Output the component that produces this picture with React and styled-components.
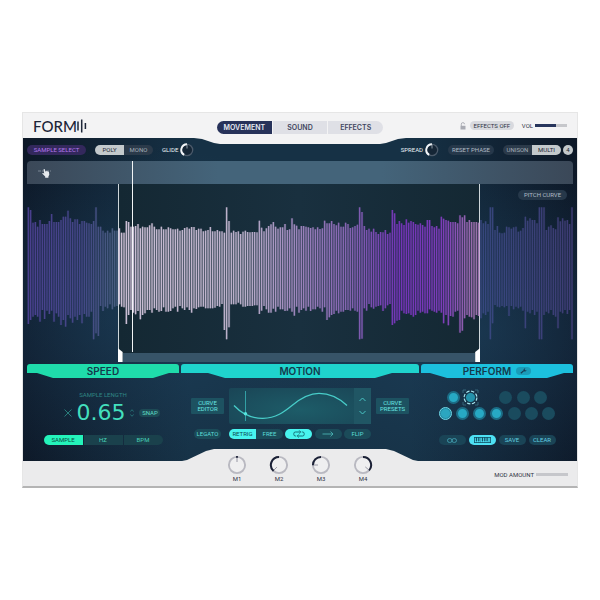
import React, { useState } from "react";
import styled, { createGlobalStyle, css } from "styled-components";

const GlobalStyle = createGlobalStyle`
  *, *::before, *::after {
    box-sizing: border-box;
  }

  body {
    margin: 0;
    background: #ffffff;
    font-family: "Roboto", "Liberation Sans", sans-serif;
    font-size: 6px;
  }

  button {
    margin: 0;
    padding: 0;
    border: 0;
    font: inherit;
    color: inherit;
    background: none;
    cursor: pointer;
  }
`;

// upper and lower end of every waveform bar, in thirds of a pixel
const PEAKS = [
  22, 30, 68, 66, 80, 60, 72, 72, 72, 63, 42, 66, 66, 66, 60, 50, 50, 32, 55, 66,
  58, 58, 72, 63, 63, 68, 70, 72, 63, 22, 80, 80, 92, 98, 92, 98, 85, 92, 92, 85,
  98, 98, 63, 66, 80, 80, 78, 72, 85, 80, 82, 82, 76, 70, 80, 88, 88, 80, 88, 88,
  82, 85, 88, 88, 86, 92, 90, 84, 82, 86, 81, 81, 90, 86, 86, 94, 92, 90, 81, 94,
  94, 90, 94, 94, 98, 22, 63, 98, 92, 96, 94, 102, 95, 92, 96, 97, 96, 96, 97, 62,
  83, 94, 85, 78, 73, 66, 80, 86, 82, 82, 72, 90, 88, 55, 73, 77, 88, 78, 78, 80,
  82, 84, 82, 88, 82, 87, 85, 62, 70, 70, 63, 72, 76, 68, 80, 80, 68, 72, 84, 82,
  78, 74, 22, 36, 78, 90, 86, 95, 86, 96, 102, 96, 97, 90, 102, 98, 30, 40, 72, 63,
  70, 75, 58, 68, 63, 66, 72, 74, 70, 75, 80, 60, 60, 78, 82, 78, 86, 50, 56, 60,
  62, 66, 66, 66, 70, 46, 52, 46, 66, 60, 66, 66, 66, 68, 60, 70, 64, 72, 22, 22,
  90, 78, 98, 100, 98, 80, 82, 86, 82, 80, 95, 92, 84, 50, 62, 55, 60, 60, 70, 22,
  22, 22, 90, 80, 76, 84, 88, 52, 64, 55, 62, 60, 72, 22,
];
const DIPS = [
  372, 360, 350, 345, 350, 365, 330, 357, 332, 342, 332, 365, 340, 350, 375, 360, 380, 345, 355, 368,
  350, 360, 345, 370, 342, 350, 350, 335, 418, 400, 408, 318, 333, 320, 325, 313, 328, 320, 318, 313,
  320, 322, 372, 345, 330, 338, 343, 333, 358, 345, 340, 330, 330, 338, 325, 330, 335, 333, 322, 335,
  335, 333, 325, 320, 335, 318, 325, 330, 322, 330, 338, 325, 327, 322, 320, 320, 325, 325, 325, 325,
  323, 318, 320, 312, 390, 418, 382, 313, 313, 313, 308, 313, 320, 320, 318, 318, 318, 316, 316, 342,
  332, 318, 328, 338, 338, 326, 335, 320, 328, 328, 333, 332, 325, 335, 347, 320, 338, 330, 325, 332,
  320, 333, 328, 328, 320, 325, 335, 322, 360, 352, 345, 342, 332, 340, 335, 335, 330, 330, 332, 325,
  332, 335, 418, 416, 325, 332, 312, 322, 326, 320, 318, 316, 333, 325, 316, 312, 375, 370, 362, 360,
  332, 340, 342, 340, 345, 350, 345, 332, 338, 335, 340, 340, 328, 332, 335, 338, 332, 338, 370, 345,
  376, 348, 350, 335, 332, 398, 392, 355, 345, 350, 352, 358, 345, 348, 355, 340, 345, 335, 418, 370,
  315, 320, 322, 318, 322, 318, 348, 318, 328, 320, 325, 320, 332, 385, 335, 340, 330, 345, 335, 418,
  418, 345, 335, 340, 330, 345, 350, 385, 335, 340, 330, 342, 330, 418,
];

const BAR_PATH = PEAKS.map((top, i) => `M${4 + i * 7} ${top + 48}V${DIPS[i] + 48}`).join("");

const PADS_TOP = ["on", "armed", null, "off", "off", "off"];
const PADS_BOTTOM = ["picked", "on", "on", "on", "off", "off", "off"];

const MACROS = [
  { name: "M1", from: -6, to: 6, pointer: 0 },
  { name: "M2", from: -138, to: 0, pointer: -135 },
  { name: "M3", from: -92, to: 0, pointer: -90 },
  { name: "M4", from: 0, to: 132, pointer: 130 },
];

const point = (c, r, deg) => {
  const a = ((deg - 90) * Math.PI) / 180;
  return `${(c + r * Math.cos(a)).toFixed(2)} ${(c + r * Math.sin(a)).toFixed(2)}`;
};
const arc = (c, r, from, to) =>
  `M${point(c, r, from)}A${r} ${r} 0 ${to - from > 180 ? 1 : 0} 1 ${point(c, r, to)}`;

function SmallKnob() {
  return (
    <svg width="14" height="14" viewBox="0 0 14 14" aria-hidden="true">
      <circle cx="7" cy="7" r="5.7" fill="#152636" stroke="#4b5a6a" strokeWidth="1.3" />
      <path d={arc(7, 5.7, -150, 0)} fill="none" stroke="#f2f5f8" strokeWidth="1.9" />
      <path d="M7 1.5V5.5" stroke="#aab4be" strokeWidth="0.8" />
    </svg>
  );
}

function MacroKnob({ from, to, pointer }) {
  return (
    <svg width="20" height="20" viewBox="0 0 20 20" aria-hidden="true">
      <circle cx="10" cy="10" r="8.1" fill="#efeff0" stroke="#b9b9c1" strokeWidth="1.9" />
      <path d={arc(10, 8.1, from, to)} fill="none" stroke="#1b2136" strokeWidth="2" />
      <path d={`M${point(10, 3, pointer)}L${point(10, 7.2, pointer)}`} stroke="#8f8f9c" strokeWidth="0.9" />
    </svg>
  );
}

function Waveform() {
  return (
    <WaveSvg viewBox="0 0 1638 534" preserveAspectRatio="none" aria-label="Sample waveform" role="img">
      <defs>
        <linearGradient id="wave" gradientUnits="userSpaceOnUse" x1="0" y1="0" x2="1638" y2="0">
          <stop offset="0" stopColor="#54459e" />
          <stop offset="0.1" stopColor="#4b4b92" />
          <stop offset="0.166" stopColor="#506688" />
          <stop offset="0.167" stopColor="#ead8f0" />
          <stop offset="0.4" stopColor="#d3c3e0" />
          <stop offset="0.5" stopColor="#b090d0" />
          <stop offset="0.6" stopColor="#9268c4" />
          <stop offset="0.68" stopColor="#8236cc" />
          <stop offset="0.76" stopColor="#8d3fd0" />
          <stop offset="0.82" stopColor="#b07cc0" />
          <stop offset="0.829" stopColor="#b07cc0" />
          <stop offset="0.83" stopColor="#3d4b88" />
          <stop offset="1" stopColor="#45407e" />
        </linearGradient>
      </defs>
      <path d={BAR_PATH} stroke="url(#wave)" strokeWidth="7" opacity="0.3" />
      <path d={BAR_PATH} stroke="url(#wave)" strokeWidth="3" opacity="0.95" />
    </WaveSvg>
  );
}

function Pads({ row, pads, $width }) {
  return (
    <PadRow $width={$width}>
      {pads.map((state, i) =>
        state ? (
          <Pad key={i} type="button" $state={state} aria-label={`${row} pad ${i + 1}`}>
            {state === "armed" && (
              <svg width="17" height="17" viewBox="0 0 17 17" aria-hidden="true">
                <circle cx="8.5" cy="8.5" r="6.4" fill="none" stroke="#a6e3ee" strokeWidth="1.2" strokeDasharray="3.3 1.7" />
                <path d="M1 4V1H4M13 1H16V4M16 13V16H13M4 16H1V13" fill="none" stroke="#41788c" strokeWidth="0.7" />
              </svg>
            )}
          </Pad>
        ) : (
          <PadGap key={i} />
        )
      )}
    </PadRow>
  );
}

export default function App() {
  const [page, setPage] = useState("MOVEMENT");
  const [unit, setUnit] = useState("SAMPLE");

  return (
    <Page>
      <GlobalStyle />
      <Device>
        <Header>
          <Logo>
            FORM
            <svg width="11" height="14" viewBox="0 0 11 14" aria-hidden="true">
              <path d="M1 2.5V11.5" stroke="#1d2638" strokeWidth="1.5" />
              <path d="M4.7 0.5V13.5" stroke="#1d2638" strokeWidth="1.5" />
              <path d="M8.4 4V10" stroke="#1d2638" strokeWidth="1.5" />
            </svg>
          </Logo>
          <PageTabs>
            {["MOVEMENT", "SOUND", "EFFECTS"].map((name) => (
              <PageTab key={name} type="button" $active={page === name} onClick={() => setPage(name)}>
                {name}
              </PageTab>
            ))}
          </PageTabs>
          <HeaderRight>
            <svg width="6" height="8" viewBox="0 0 6 8" aria-hidden="true">
              <path d="M1.3 4V2.2a1.6 1.6 0 0 1 3.2 0" fill="none" stroke="#a9abb3" strokeWidth="0.9" />
              <rect x="0.5" y="3.8" width="5" height="3.7" fill="#a9abb3" />
            </svg>
            <EffectsOff type="button">EFFECTS OFF</EffectsOff>
            <Volume>
              VOL
              <Track>
                <TrackFill style={{ width: "66%" }} />
              </Track>
            </Volume>
          </HeaderRight>
        </Header>

        <Body>
          <Toolbar>
            <SampleSelect type="button">SAMPLE SELECT</SampleSelect>
            <Switch>
              <SwitchButton type="button" $active>POLY</SwitchButton>
              <SwitchButton type="button">MONO</SwitchButton>
            </Switch>
            <KnobLabel>GLIDE <SmallKnob /></KnobLabel>
            <Spacer />
            <KnobLabel>SPREAD <SmallKnob /></KnobLabel>
            <GreyPill type="button" $width={46}>RESET PHASE</GreyPill>
            <Voices>
              <Switch>
                <SwitchButton type="button">UNISON</SwitchButton>
                <SwitchButton type="button" $active>MULTI</SwitchButton>
              </Switch>
              <Count type="button">4</Count>
            </Voices>
          </Toolbar>

          <Editor>
            <Overview>
              <svg width="15" height="12" viewBox="0 0 15 12" aria-hidden="true">
                <path d="M0 4H13" stroke="#8b98a3" strokeWidth="0.8" strokeDasharray="3 1" />
                <path d="M5.6 2.2c.5-.5 1.2-.2 1.3.4l.5 2.1.4-.5c.4-.3.8-.2 1 .2.4-.4.9-.3 1.1.2.6-.3 1 0 1.1.6l.3 2.6-.9 1.8v1.2H7.2V9.6L4.4 6.8c-.3-.6.3-1.1.9-.7l.9.6z" fill="#e6eaee" />
              </svg>
            </Overview>
            <Wave>
              <Selection>
                <Handle $side="left" />
                <ScrollThumb />
                <Handle $side="right" />
              </Selection>
              <Waveform />
              <PitchCurve type="button" $width={49}>PITCH CURVE</PitchCurve>
            </Wave>
            <Playhead />
          </Editor>

          <Sections>
            <Section>
              <SectionTitle $color="#1fdcab" $inset={10} $slope={16}>SPEED</SectionTitle>
              <SpeedBody>
                <Caption>SAMPLE LENGTH</Caption>
                <ValueRow>
                  <svg width="8" height="8" viewBox="0 0 8 8" aria-hidden="true">
                    <path d="M0.5 0.5 7.5 7.5M7.5 0.5 0.5 7.5" stroke="#2b8681" strokeWidth="0.9" />
                  </svg>
                  <Value>0.65</Value>
                  <svg width="4" height="8" viewBox="0 0 4 8" aria-hidden="true">
                    <path d="M0.3 2.6 2 0.7 3.7 2.6M0.3 5.4 2 7.3 3.7 5.4" fill="none" stroke="#2b7f80" strokeWidth="0.8" />
                  </svg>
                  <Snap type="button">SNAP</Snap>
                </ValueRow>
                <UnitTabs>
                  {["SAMPLE", "HZ", "BPM"].map((name) => (
                    <UnitTab key={name} type="button" $active={unit === name} onClick={() => setUnit(name)}>
                      {name}
                    </UnitTab>
                  ))}
                </UnitTabs>
              </SpeedBody>
            </Section>

            <Section>
              <SectionTitle $color="#1fd4cd" $inset={27} $slope={17}>MOTION</SectionTitle>
              <MotionBody>
                <CurveButton type="button">CURVE EDITOR</CurveButton>
                <CurveDisplay>
                  <svg width="125" height="36" viewBox="0 0 125 36" aria-hidden="true">
                    <path d="M16.5 3V33" stroke="#36a9ae" strokeWidth="0.9" />
                    <path d="M5 17.5C14 27 23 30.5 34 30.3 47 30 55 24 63 17.5 72 10 80 5.4 90 5.4 102 5.4 110 10 118 17.5" fill="none" stroke="#48cdc9" strokeWidth="1.3" />
                    <circle cx="16.5" cy="25.8" r="1.7" fill="#56e5de" />
                  </svg>
                  <Arrows>
                    <button type="button" aria-label="Previous curve">
                      <svg width="7" height="5" viewBox="0 0 7 5"><path d="M0.5 4 3.5 1 6.5 4" fill="none" stroke="#49c5c4" strokeWidth="1" /></svg>
                    </button>
                    <button type="button" aria-label="Next curve">
                      <svg width="7" height="5" viewBox="0 0 7 5"><path d="M0.5 1 3.5 4 6.5 1" fill="none" stroke="#49c5c4" strokeWidth="1" /></svg>
                    </button>
                  </Arrows>
                </CurveDisplay>
                <CurveButton type="button">CURVE PRESETS</CurveButton>
                <TealPill type="button">LEGATO</TealPill>
                <MotionButtons>
                  <TealSwitch>
                    <TealHalf type="button" $active>RETRIG</TealHalf>
                    <TealHalf type="button">FREE</TealHalf>
                  </TealSwitch>
                  <TealPill type="button" $active aria-label="Loop">
                    <svg width="12" height="8" viewBox="0 0 12 8" aria-hidden="true">
                      <path d="M3.2 6H2.4A1.6 1.6 0 0 1 0.8 4.4V3.6A1.6 1.6 0 0 1 2.4 2H7.4M8.8 2H9.6A1.6 1.6 0 0 1 11.2 3.6V4.4A1.6 1.6 0 0 1 9.6 6H4.6" fill="none" stroke="#11636b" strokeWidth="0.9" />
                      <path d="M6.2 0.4 7.8 2 6.2 3.6M5.8 4.4 4.2 6 5.8 7.6" fill="none" stroke="#11636b" strokeWidth="0.8" />
                    </svg>
                  </TealPill>
                  <TealPill type="button" aria-label="One shot">
                    <svg width="12" height="6" viewBox="0 0 12 6" aria-hidden="true">
                      <path d="M0.5 3H11M8.5 0.6 11 3 8.5 5.4" fill="none" stroke="#4fbcbd" strokeWidth="0.8" />
                    </svg>
                  </TealPill>
                  <TealPill type="button">FLIP</TealPill>
                </MotionButtons>
              </MotionBody>
            </Section>

            <Section>
              <SectionTitle $color="#1cc0de" $inset={9} $slope={17}>
                PERFORM
                <Wrench type="button" aria-label="Perform settings">
                  <svg width="7" height="6" viewBox="0 0 7 6" aria-hidden="true">
                    <path d="M0.8 5.3 3.8 2.6" stroke="#153a52" strokeWidth="1.2" />
                    <path d="M5.4 0.5A1.5 1.5 0 1 0 6.5 2.1L5 2.4 4.6 1.6Z" fill="#153a52" />
                  </svg>
                </Wrench>
              </SectionTitle>
              <PerformBody>
                <Pads row="Upper" pads={PADS_TOP} $width={100} />
                <Pads row="Lower" pads={PADS_BOTTOM} $width={117} />
                <PerformButtons>
                  <TealPill type="button" $blue aria-label="Link">
                    <svg width="10" height="5" viewBox="0 0 10 5" aria-hidden="true">
                      <rect x="0.5" y="0.6" width="4.6" height="3.8" rx="1.9" fill="none" stroke="#48a9bb" strokeWidth="0.8" />
                      <rect x="4.9" y="0.6" width="4.6" height="3.8" rx="1.9" fill="none" stroke="#48a9bb" strokeWidth="0.8" />
                    </svg>
                  </TealPill>
                  <TealPill type="button" $blue $active aria-label="Keyboard">
                    <svg width="17" height="6" viewBox="0 0 17 6" aria-hidden="true">
                      <rect x="0.4" y="0.4" width="16.2" height="5.2" fill="none" stroke="#125267" strokeWidth="0.8" />
                      <path d="M2.5 0V4M4.8 0V4M8.5 0V4M10.8 0V4M13.1 0V4" stroke="#125267" strokeWidth="1.3" />
                      <path d="M6.6 0V6M15 0V6M2.5 4V6M4.8 4V6M8.5 4V6M10.8 4V6M13.1 4V6" stroke="#125267" strokeWidth="0.4" />
                    </svg>
                  </TealPill>
                  <TealPill type="button" $blue>SAVE</TealPill>
                  <TealPill type="button" $blue>CLEAR</TealPill>
                </PerformButtons>
              </PerformBody>
            </Section>
          </Sections>
        </Body>

        <Footer>
          <Macros>
            {MACROS.map((m) => (
              <Macro key={m.name}>
                <MacroKnob from={m.from} to={m.to} pointer={m.pointer} />
                {m.name}
              </Macro>
            ))}
          </Macros>
          <ModAmount>
            MOD AMOUNT
            <Track />
          </ModAmount>
        </Footer>
      </Device>
    </Page>
  );
}

const Page = styled.main`
  padding: 112px 22px;
`;

const Device = styled.div`
  border: 1px solid #e6e6e6;
  border-bottom: 2px solid #b4b4b4;
  background: #ececed;
`;

const Header = styled.header`
  position: relative;
  z-index: 1;
  display: grid;
  grid-template-columns: 1fr 166px 1fr;
  height: 31px;
  margin-bottom: -6px;
  padding: 0 10px;
  background: #f3f3f4;
  clip-path: polygon(
    0 0, 100% 0, 100% 25px, calc(50% + 106px) 25px, calc(50% + 98px) 26px, calc(50% + 86px) 30px, calc(50% + 80px) 31px,
    calc(50% - 80px) 31px, calc(50% - 86px) 30px, calc(50% - 98px) 26px, calc(50% - 106px) 25px, 0 25px
  );
`;

const Logo = styled.div`
  display: flex;
  align-items: center;
  height: 25px;
  color: #1d2638;
  font-family: "Lato", sans-serif;
  font-size: 15px;
  font-weight: 500;
`;

const PageTabs = styled.nav`
  display: grid;
  grid-template-columns: repeat(3, 1fr);
  height: 13px;
  margin-top: 8px;
  gap: 1px;
  border-radius: 7px;
  overflow: hidden;
`;

const PageTab = styled.button`
  font-family: "Inter", sans-serif;
  font-size: 7px;
  font-weight: 600;
  line-height: 13px;
  color: ${({ $active }) => ($active ? "#e9ebf2" : "#3f4660")};
  background: ${({ $active }) => ($active ? "#27325a" : "#dfe0e6")};
`;

const HeaderRight = styled.div`
  display: flex;
  align-items: center;
  justify-content: flex-end;
  height: 25px;
  gap: 4px;
  color: #2f3344;
`;

const EffectsOff = styled.button`
  width: 44px;
  height: 9px;
  border-radius: 5px;
  line-height: 9px;
  background: #d8d9de;
`;

const Volume = styled.div`
  display: flex;
  align-items: center;
  gap: 2px;
  margin-left: 4px;
`;

const Track = styled.div`
  width: 32px;
  height: 3px;
  background: #c6c7cb;
`;

const TrackFill = styled.div`
  height: 100%;
  background: #27355c;
`;

const Body = styled.div`
  padding: 0 4px;
  background:
    radial-gradient(ellipse 260px 170px at 20% 55%, rgba(36, 78, 112, 0.4), transparent),
    radial-gradient(ellipse 260px 170px at 82% 60%, rgba(36, 78, 112, 0.4), transparent),
    linear-gradient(90deg, #0d1827, #163145 30%, #163145 70%, #0d1827);
`;

const Toolbar = styled.div`
  display: flex;
  align-items: center;
  height: 23px;
  gap: 9px;
`;

const pill = css`
  height: 10px;
  border-radius: 5px;
  line-height: 10px;
  text-align: center;
`;

const SampleSelect = styled.button`
  ${pill}
  width: 59px;
  color: #b478ee;
  background: #33285c;
`;

const Switch = styled.div`
  display: flex;
  height: 10px;
  border-radius: 5px;
  overflow: hidden;
`;

const SwitchButton = styled.button`
  width: 29px;
  line-height: 10px;
  color: ${({ $active }) => ($active ? "#1c2632" : "#a5afba")};
  background: ${({ $active }) => ($active ? "#c3c9cc" : "#2b3a4a")};
`;

const KnobLabel = styled.div`
  display: flex;
  align-items: center;
  gap: 2px;
  color: #eef2f6;
`;

const Spacer = styled.div`
  flex: 1;
`;

const GreyPill = styled.button`
  ${pill}
  width: ${({ $width }) => $width}px;
  color: #b0bcc8;
  background: #26384a;
`;

const Voices = styled.div`
  display: flex;
  gap: 2px;
`;

const Count = styled.button`
  width: 10px;
  height: 10px;
  border-radius: 50%;
  line-height: 10px;
  color: #1c2632;
  background: #c3c9cc;
`;

const Editor = styled.div`
  position: relative;
`;

const Overview = styled.div`
  display: flex;
  align-items: center;
  height: 23px;
  padding-left: 11px;
  border-radius: 4px 4px 0 0;
  background: linear-gradient(90deg, #3b4858, #44647a 35%, #44647a 65%, #3b4858);
`;

const Wave = styled.div`
  position: relative;
  height: 178px;
`;

const WaveSvg = styled.svg`
  position: relative;
  display: block;
  width: 100%;
  height: 100%;
`;

const Selection = styled.div`
  position: absolute;
  inset: 0 17% 0 16.6%;
  border: solid #cdd6da;
  border-width: 0 1px;
  background: linear-gradient(90deg, #142833, #19303f 50%, #142833);
`;

const Handle = styled.span`
  position: absolute;
  bottom: 0;
  ${({ $side }) => $side}: -1px;
  width: 5px;
  height: 14px;
  background: #ffffff;
  clip-path: ${({ $side }) =>
    $side === "left" ? "polygon(0 0, 100% 4px, 100% 100%, 0 100%)" : "polygon(100% 0, 0 4px, 0 100%, 100% 100%)"};
`;

const ScrollThumb = styled.div`
  position: absolute;
  right: 4px;
  bottom: 0;
  left: 4px;
  height: 9px;
  background: #375468;
`;

const PitchCurve = styled(GreyPill)`
  position: absolute;
  top: 6px;
  right: 6px;
`;

const Playhead = styled.div`
  position: absolute;
  top: 0;
  left: 19.3%;
  width: 1px;
  height: 191px;
  background: #f2f5f6;
`;

const Sections = styled.div`
  display: grid;
  grid-template-columns: 152fr 238fr 152fr;
  gap: 2px;
  padding-top: 2px;
`;

const Section = styled.section`
  height: 97px;
`;

const SectionTitle = styled.h2`
  display: flex;
  align-items: center;
  justify-content: center;
  height: 14px;
  margin: 0;
  gap: 5px;
  border-radius: 3px 3px 0 0;
  color: #143a4c;
  font-family: "Inter", sans-serif;
  font-size: 10px;
  font-weight: 600;
  line-height: 14px;
  background: ${({ $color }) => $color};
  clip-path: ${({ $inset, $slope }) => `polygon(
    0 0, 100% 0, 100% 9px, calc(100% - ${$inset}px) 9px, calc(100% - ${$inset + $slope}px) 14px,
    ${$inset + $slope}px 14px, ${$inset}px 9px, 0 9px
  )`};
`;

const Wrench = styled.button`
  display: flex;
  align-items: center;
  justify-content: center;
  width: 15px;
  height: 8px;
  border-radius: 4px;
  background: #1a9cba;
`;

const SpeedBody = styled.div`
  display: flex;
  flex-direction: column;
  align-items: center;
  padding-top: 13px;
`;

const Caption = styled.div`
  line-height: 8px;
  color: #2f8684;
`;

const ValueRow = styled.div`
  display: flex;
  align-items: center;
  height: 28px;
  gap: 5px;
  margin-left: 18px;
`;

const Value = styled.output`
  color: #43dfbd;
  font-family: "DejaVu Sans", sans-serif;
  font-size: 22px;
  line-height: 28px;
`;

const Snap = styled.button`
  width: 21px;
  height: 8px;
  border-radius: 4px;
  line-height: 8px;
  color: #5fdcc6;
  background: #1d4a55;
`;

const UnitTabs = styled.div`
  display: grid;
  grid-template-columns: repeat(3, 1fr);
  width: 119px;
  height: 10px;
  margin-top: 8px;
  gap: 1px;
  border-radius: 5px;
  overflow: hidden;
`;

const UnitTab = styled.button`
  line-height: 10px;
  color: ${({ $active }) => ($active ? "#0d4a3e" : "#48d0b8")};
  background: ${({ $active }) => ($active ? "#24f3ba" : "#1a414c")};
`;

const MotionBody = styled.div`
  display: grid;
  grid-template-columns: 33px 142px 33px;
  justify-content: center;
  align-items: center;
  justify-items: center;
  gap: 5px;
  padding-top: 10px;
`;

const CurveButton = styled.button`
  width: 33px;
  height: 16px;
  padding: 0 2px;
  border-radius: 1px;
  line-height: 6px;
  color: #6ae6e2;
  background: #1d5261;
`;

const CurveDisplay = styled.div`
  display: flex;
  width: 142px;
  height: 36px;
  border-radius: 2px;
  background: radial-gradient(ellipse at 50% 60%, #1d5c68, #1a4556);
`;

const Arrows = styled.div`
  display: flex;
  flex: 1;
  flex-direction: column;
  align-items: center;
  justify-content: center;
  gap: 8px;
  background: #205664;

  button {
    display: flex;
  }
`;

const MotionButtons = styled.div`
  display: flex;
  justify-content: space-between;
  width: 142px;
`;

const tealColors = css`
  color: ${({ $active, $blue }) => ($active ? "#0b4c54" : $blue ? "#64d0e2" : "#5cdcd8")};
  background: ${({ $active, $blue }) => ($active ? ($blue ? "#4ee0f3" : "#48f4ee") : $blue ? "#1a4456" : "#1b4b59")};
`;

const TealPill = styled.button`
  display: flex;
  align-items: center;
  justify-content: center;
  width: 27px;
  height: 10px;
  border-radius: 5px;
  line-height: 10px;
  ${tealColors}
`;

const TealSwitch = styled.div`
  display: flex;
  height: 10px;
  border-radius: 5px;
  overflow: hidden;
`;

const TealHalf = styled.button`
  width: 27px;
  line-height: 10px;
  ${tealColors}
`;

const PerformBody = styled.div`
  display: flex;
  flex-direction: column;
  align-items: center;
  gap: 3px;
  padding-top: 13px;
`;

const PadRow = styled.div`
  display: flex;
  justify-content: space-between;
  width: ${({ $width }) => $width}px;
`;

const padStyles = {
  on: css`
    border: 2px solid #1c6d86;
    background: #27a9c4;
  `,
  off: css`
    background: #1a4b5e;
  `,
  armed: css`
    background: radial-gradient(circle, #2492ab 4px, #17394e 5px);
  `,
  picked: css`
    border: 1px solid #6fdcec;
    background: radial-gradient(circle, #2ba6c0 4px, #1c6d86 6px);
  `,
};

const Pad = styled.button`
  display: flex;
  align-items: center;
  justify-content: center;
  width: 13px;
  height: 13px;
  border-radius: 50%;
  ${({ $state }) => padStyles[$state]}

  svg {
    flex-shrink: 0;
  }
`;

const PadGap = styled.span`
  width: 13px;
`;

const PerformButtons = styled.div`
  display: flex;
  gap: 3px;
  margin-top: 12px;
`;

const Footer = styled.footer`
  position: relative;
  display: grid;
  grid-template-columns: 1fr 146px 1fr;
  height: 37px;
  margin-top: -12px;
  padding: 0 9px;
  color: #2f3344;
  background: #ebebec;
  clip-path: polygon(
    0 12px, calc(50% - 118px) 12px, calc(50% - 113px) 11px, calc(50% - 94px) 2px, calc(50% - 86px) 0,
    calc(50% + 86px) 0, calc(50% + 94px) 2px, calc(50% + 113px) 11px, calc(50% + 118px) 12px, 100% 12px, 100% 100%, 0 100%
  );
`;

const Macros = styled.div`
  display: flex;
  grid-column: 2;
  justify-content: space-between;
  padding-top: 6px;
`;

const Macro = styled.div`
  display: flex;
  flex-direction: column;
  align-items: center;
  line-height: 7px;
`;

const ModAmount = styled.div`
  display: flex;
  align-items: center;
  justify-content: flex-end;
  gap: 2px;
  padding-top: 14px;
`;
